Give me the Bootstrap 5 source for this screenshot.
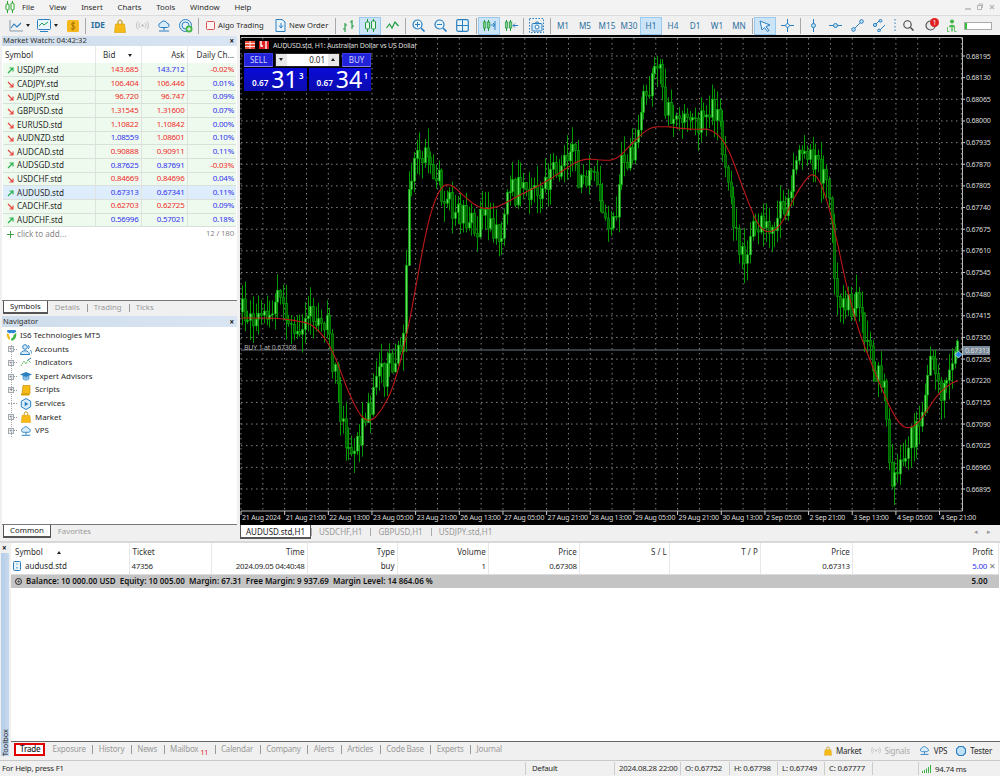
<!DOCTYPE html>
<html lang="en">
<head>
<meta charset="UTF-8">
<meta name="viewport" content="width=device-width, initial-scale=1.0">
<title>MetaTrader 5</title>
<link href="https://cdn.jsdelivr.net/npm/bootstrap@5.3.0/dist/css/bootstrap.min.css" rel="stylesheet">
<style>
  html, body { height: 776px; overflow: hidden; }
  body {
    font-family: "Noto Sans", "Open Sans", sans-serif;
    font-size: 8px;
    line-height: 1.2;
    background-color: #f0f0f0;
    color: #2a2a2a;
  }
  /* menu + toolbar */
  .menu-bar { height: 15px; padding-left: 22px; gap: 14.8px; background: #f3f3f3; font-size: 7.8px; }
  .menu-logo { position: absolute; left: 5px; top: 1px; }
  .win-btns { position: absolute; right: 5px; top: 3px; gap: 6px; color: #aaa; }
  .tool-bar { height: 20px; padding-left: 6px; border-top: 1px solid #dcdcdc; background: #f0f0f0; }
  .tb-btn { width: 22px; height: 18px; flex: none; border: 1px solid transparent; }
  .tb-wide { width: 28px; justify-content: flex-start !important; padding-left: 2px; gap: 3px; }
  .tb-text { height: 18px; flex: none; gap: 3px; font-size: 7.7px; }
  .tb-on { background: #cce4f7; border-color: #99c9ef; }
  .tb-sep { width: 1px; height: 16px; margin: 0 1px; background: #a8a8a8; flex: none; }
  .sep-a { margin-left: 2px; }
  .sep-b { margin-left: 3px; }
  .sep-c { margin-left: 3px; }
  .tb-tf { font-size: 8.2px; color: #2b6f9f; }
  .ide-txt { color: #2b6f9f; font-weight: 700; font-size: 8.4px; }
  .tb-dots { flex: none; margin: 0 1px 0 4px; }
  .drop-caret { width: 0; height: 0; border-left: 2.5px solid transparent; border-right: 2.5px solid transparent; border-top: 3px solid #222; }
  .gap-algo { margin-left: 6px; width: 65px; }
  .gap-order { margin-left: 4px; width: 58px; }
  .lvl-bar { width: 28px; height: 8px; margin-left: 1px; border: 1px solid #aaa; background: linear-gradient(90deg, #33c033 0 2px, #fff 2px); flex: none; }
  .notif-dot { position: absolute; right: 1px; top: 0; width: 9px; height: 9px; border-radius: 50%; background: #e02020; color: #fff; font-size: 6.5px; line-height: 9px; text-align: center; }
  .pos-host { position: relative; }

  /* main frame */
  .main-row { height: 506px; }
  .side-col { width: 240px; flex: none; padding: 1px 3px 0 2px; }
  .chart-col { width: 760px; flex: none; }
  .dock-panel { background: #fff; border: 0; }
  .dock-title { height: 11px; padding: 0 3px 0 1px; background: linear-gradient(90deg, #cfdcea, #d9e5f2); color: #333; font-size: 7.6px; }
  .title-short { height: 10px; }
  .dock-close { font-size: 8px; font-weight: 700; line-height: 1; color: #111; }
  .watch-box { height: 278px; }
  .nav-box { height: 222px; margin-top: 2px; }

  /* market watch table */
  .table.watch-table { --bs-table-bg: transparent; margin: 0; table-layout: fixed; width: 233px; margin-left: 1px; font-size: 8.1px; }
  .table.watch-table > * > tr > * { padding: 0 2px; height: 13.65px; border-bottom: 1px solid #d9dfd9; border-right: 1px solid #dfe3df; vertical-align: middle; white-space: nowrap; overflow: hidden; }
  .table.watch-table > * > tr > *:last-child { border-right: 0; }
  .table.watch-table > thead > tr > th { height: 17px; font-weight: 400; background: #fff; border-bottom: 0; border-right-color: #e8e8e8; color: #333; }
  .table.watch-table > tbody > tr > td { background: #eefaee; color: #2a2a2a; }
  .table.watch-table > tbody > tr.row-sel > td { background: #deedfb; }
  .table.watch-table > tbody > tr.row-add > td { background: #fff; border: 0; color: #8a8a8a; }
  .table.watch-table > tbody > tr > td.num-cell { font-size: 7.9px; letter-spacing: -.2px; }
  .col-sym { width: 92px; } .col-num { width: 46px; } .col-day { width: 49px; }
  .tick-up { color: #2f2ff0 !important; } .tick-dn { color: #f02a2a !important; }
  .sort-caret { display: inline-block; margin: 0 7px 1px 10px; width: 0; height: 0; border-left: 2.5px solid transparent; border-right: 2.5px solid transparent; border-top: 3px solid #222; }
  .sort-up { margin: 0 0 1px 12px; border-top: 0; border-bottom: 3px solid #222; }
  .arrow-ico { margin: 0 3px 0 2px; vertical-align: -1px; }

  /* tabs */
  .nav.tab-strip { flex-wrap: nowrap; height: 14px; padding-left: 1px; border-top: 1px solid #777; background: #f0f0f0; }
  .tab-strip .nav-link { padding: 0 7px; height: 13px; line-height: 12px; font-size: 7.8px; color: #9a9a9a; border-radius: 0; position: relative; white-space: nowrap; }
  .tab-strip .nav-link + .nav-link::before { content: ""; position: absolute; left: 0; top: 3px; height: 8px; width: 1px; background: #999; }
  .tab-strip .nav-link.active + .nav-link::before { display: none; }
  .tab-strip .nav-link.active { color: #222; background: #fff; border: 1px solid #555; border-top: 0; border-bottom-width: 2px; line-height: 11px; padding: 0 6px; }
  .fill-area { flex: 1 1 auto; }

  /* navigator tree */
  .nav-tree { padding-top: 2px; position: relative; height: 195px; }
  .tree-row { height: 13.6px; padding-left: 6px; font-size: 7.9px; white-space: nowrap; }
  .tree-root { padding-left: 4px; }
  .tree-label { padding-left: 3px; }
  .tree-plus { width: 6px; height: 6px; flex: none; border: 1px solid #a0a8b0; background: #f4f4f4; font-size: 6px; line-height: 4px; text-align: center; color: #446; }
  .tree-stub { width: 6px; flex: none; border-bottom: 1px dotted #999; height: 1px; }
  .tree-dash { width: 3px; flex: none; border-bottom: 1px dotted #999; height: 1px; margin-right: 3px; }
  .tree-line { position: absolute; left: 8.5px; top: 18px; height: 92px; border-left: 1px dotted #aaa; }

  /* chart */
  .chart-wrap { height: 490px; background: #000; position: relative; }
  .chart-svg { display: block; width: 760px; height: 490px; }
  .chart-svg text { font-family: "Noto Sans", sans-serif; font-size: 7px; letter-spacing: -.2px; fill: #ddd; }
  .trade-pad { position: absolute; left: 4px; top: 18px; width: 127px; color: #fff; }
  .pad-top { height: 15px; gap: 2px; }
  .pad-btn { width: 29px; height: 14px; background: #2222d8; border: 1px solid #3a3ae8; border-bottom: 1px solid #8080ee; color: #cfd4ff; font-size: 8px; text-align: center; line-height: 12px; flex: none; }
  .pad-qty { width: 65px; height: 14px; background: #fff; border: 1px solid #222; color: #222; font-size: 8px; flex: none; }
  .pad-step { width: 11px; height: 100%; background: #e8e8e8; flex: none; position: relative; }
  .pad-val { flex: 1 1 auto; text-align: right; padding-right: 3px; line-height: 12px; }
  .car-up, .car-dn { position: absolute; left: 3px; top: 4px; width: 0; height: 0; border-left: 2.5px solid transparent; border-right: 2.5px solid transparent; }
  .car-up { border-bottom: 3px solid #222; } .car-dn { border-top: 3px solid #222; }
  .pad-prices { gap: 2px; }
  .pad-price { width: 62.5px; height: 23px; background: linear-gradient(#0a0ad8, #0c0cb0); padding-left: 8px; align-items: flex-end; flex: none; position: relative; }
  .pr-small { font-size: 8.2px; font-weight: 600; padding-bottom: 3px; padding-right: 3px; }
  .pr-big { font-size: 23px; line-height: 20px; padding-bottom: 2px; }
  .pr-sup { font-size: 8px; font-weight: 600; position: absolute; right: 3px; top: 3px; }
  .doc-tabs { height: 16px; padding-left: 0; background: #f0f0f0; position: relative; }
  .doc-tabs .nav-link { padding: 0 8px; height: 14px; line-height: 13px; font-size: 8px; color: #9a9a9a; position: relative; border-radius: 0; white-space: nowrap; }
  .doc-tabs .nav-link + .nav-link::before { content: ""; position: absolute; left: 0; top: 3px; height: 8px; width: 1px; background: #aaa; }
  .doc-tabs .nav-link.active { color: #222; background: #fff; border: 1px solid #555; border-top: 0; border-bottom-width: 2px; width: 71px; padding: 0 5px; }
  .doc-arrows { position: absolute; right: 9px; top: 3px; gap: 9px; color: #999; font-size: 7px; }

  /* toolbox */
  .tool-box { height: 219px; border-top: 2px solid #d8d8d8; position: relative; }
  .box-strip { width: 11px; flex: none; position: relative; }
  .box-close { position: absolute; left: 2px; top: 1px; font-size: 8px; font-weight: 700; line-height: 1; color: #111; }
  .box-label { position: absolute; left: 1px; top: 10px; bottom: 4px; width: 8px; background: linear-gradient(90deg, #b5cde8, #c6d9ee); }
  .box-label span { position: absolute; left: 0; bottom: 0; writing-mode: vertical-rl; transform: rotate(180deg); font-size: 7.4px; line-height: 8px; color: #222; }
  .box-main { flex: 1 1 auto; }
  .trade-area { height: 198px; background: #fff; }
  .table.trade-table { --bs-table-bg: transparent; table-layout: fixed; width: 988px; margin: 0; font-size: 8px; }
  .table.trade-table > * > tr > * { padding: 0 2px; border-bottom: 0; white-space: nowrap; vertical-align: middle; }
  .table.trade-table > thead > tr > th { height: 16px; padding-top: 2px; font-weight: 400; border-right: 1px solid #e8e8e8; color: #333; }
  .table.trade-table > tbody > tr > td { height: 15px; border-right: 1px solid #e8e8e8; border-bottom: 1px solid #ddd; color: #2a2a2a; }
  .table.trade-table > tbody > tr > td.num-cell { font-size: 7.9px; letter-spacing: -.25px; }
  .table.trade-table > tbody > tr.row-total > td { height: 14px; background: #c4c4c4; font-weight: 600; border: 0; color: #111; }
  .tc-1 { width: 118px; padding-left: 4px !important; } .tc-2 { width: 82px; padding-left: 3px !important; } .tc-3 { width: 96px; } .tc-4 { width: 90px; } .tc-5 { width: 91px; }
  .tc-6 { width: 91px; } .tc-7 { width: 90px; } .tc-8 { width: 91px; } .tc-9 { width: 92px; } .tc-10 { width: 146px; }
  .profit-cell { padding-right: 11px !important; position: relative; }
  .profit-x { position: absolute; right: 2px; top: 2px; color: #777; font-size: 8px; }
  .head-right { padding-right: 5px !important; }
  .file-ico { margin-right: 4px; vertical-align: -2px; }
  .circ-plus { display: inline-block; width: 7px; height: 7px; border: 1px solid #222; border-radius: 50%; font-size: 6.5px; line-height: 5px; text-align: center; margin: 0 4px 0 2px; font-weight: 400; }
  .box-tabs { height: 17px; padding-left: 3px; border-top: 1px solid #666; }
  .nav.trade-tabs { flex-wrap: nowrap; }
  .trade-tabs .nav-link { padding: 0 6.5px; height: 15px; line-height: 13px; font-size: 8px; letter-spacing: -.2px; color: #9a9a9a; position: relative; border-radius: 0; white-space: nowrap; }
  .trade-tabs .nav-link + .nav-link::before { content: ""; position: absolute; left: 0; top: 3px; height: 9px; width: 1px; background: #999; }
  .trade-tabs .nav-link.active + .nav-link::before { display: none; }
  .trade-tabs .nav-link.active { color: #222; background: #fff; outline: 2px solid #e00000; outline-offset: -2px; padding: 0 6px; width: 31px; margin-top: 1px; height: 13px; font-weight: 500; margin-right: 1px; line-height: 11px; }
  .mail-num { color: #e02020; font-size: 7px; position: relative; top: 3px; margin-left: 2px; }
  .side-links { margin-left: auto; gap: 9px; padding-right: 8px; font-size: 8px; letter-spacing: -.2px; padding-top: 1px; }
  .side-off { color: #aaa; }

  /* status */
  .status-bar { height: 16px; border-top: 1px solid #c8c8c8; background: #f0f0f0; font-size: 7.8px; letter-spacing: -.2px; }
  .st-cell { height: 13px; padding-left: 4px; border-left: 1px solid #ccc; flex: none; line-height: 12px; white-space: nowrap; }
  .st-help { width: 525px; padding-left: 2px; border-left: 0; }
  .st-def { width: 89px; padding-left: 6px; } .st-time { width: 66px; } .st-o { width: 49px; } .st-h { width: 48px; } .st-l { width: 47px; } .st-c { width: 48px; } .st-gap { width: 46px; }
  .st-ping { gap: 4px; padding-left: 3px; }
</style>
</head>
<body>

<svg width="0" height="0" class="position-absolute">
  <defs>
    <symbol id="i-bag" viewBox="0 0 12 14"><path d="M4 5V3a2 2 0 0 1 4 0v2" fill="none" stroke="#b88a00" stroke-width="1"/><path d="M1.5 5h9l1 8.5H.5z" fill="#f6bb18" stroke="#d9a000" stroke-width=".6"/></symbol>
    <symbol id="i-cloud" viewBox="0 0 14 14"><path d="M3.5 8.5a2.3 2.3 0 0 1 .2-4.5A3.4 3.4 0 0 1 10 4.2a2.2 2.2 0 0 1 .5 4.3z" fill="#d8ecfa" stroke="#2a7fc0"/><path d="M7 8.5v2.5M2 12h10" stroke="#2a7fc0" stroke-width="1.2" fill="none"/></symbol>
    <symbol id="i-up" viewBox="0 0 7 7"><path d="M1 6 6 1M2.5 1H6v3.5" fill="none" stroke="#1fb04a" stroke-width="1.1"/></symbol>
    <symbol id="i-dn" viewBox="0 0 7 7"><path d="M1 1 6 6M6 2.5V6H2.500" fill="none" stroke="#e8413c" stroke-width="1.1"/></symbol>
  </defs>
</svg>

<!-- menu -->
<div class="menu-bar d-flex align-items-center position-relative">
  <svg class="menu-logo" width="10" height="12" viewBox="0 0 10 12"><path d="M2.500 0v12M7.500 0v12" stroke="#29a329"/><rect x="1" y="3" width="3" height="6" rx="1" fill="#fff" stroke="#29a329"/><rect x="6" y="2" width="3" height="7" rx="1" fill="#fff" stroke="#29a329"/></svg>
  <span>File</span><span>View</span><span>Insert</span><span>Charts</span><span>Tools</span><span>Window</span><span>Help</span>
  <div class="win-btns d-flex align-items-center">
    <svg width="6" height="8" viewBox="0 0 6 8"><path d="M0 6h6" stroke="#b5b5b5" stroke-width="1.500"/></svg>
    <svg width="6" height="8" viewBox="0 0 6 8"><path d="M.5 2.500h4v4h-4zM2 2.500V1h3.500v3.500H4.500" fill="none" stroke="#b5b5b5"/></svg>
    <svg width="6" height="8" viewBox="0 0 6 8"><path d="m1 2 4 4M5 2 1 6" stroke="#b5b5b5" stroke-width="1.200"/></svg>
  </div>
</div>

<!-- toolbar -->
<div class="tool-bar d-flex align-items-center">
  <div class="tb-btn tb-wide d-flex align-items-center justify-content-center"><svg width="14" height="12" viewBox="0 0 14 12"><path d="M1 0v11h13" fill="none" stroke="#8a9aa8"/><path d="m2 8 3-4 3 3 4-4" fill="none" stroke="#2a7fc0" stroke-width="1.100"/></svg><span class="drop-caret"></span></div>
  <div class="tb-btn tb-wide d-flex align-items-center justify-content-center"><svg width="14" height="13" viewBox="0 0 14 13"><rect x=".5" y=".5" width="13" height="10" rx="1" fill="#eaf4fb" stroke="#2a7fc0"/><path d="m2 7 3-3 2 2 4-3" fill="none" stroke="#1fa04a"/><path d="M3 12.500h8" stroke="#2a7fc0"/></svg><span class="drop-caret"></span></div>
  <div class="tb-btn d-flex align-items-center justify-content-center"><svg width="12" height="12" viewBox="0 0 12 12"><rect width="12" height="12" rx="1.500" fill="#f5b91d"/><path d="M8 3.500C7 2.600 4.500 2.800 4.500 4.300S8 5.700 8 7.500 5 9.500 4 8.500M6 1.500v9" fill="none" stroke="#9a6a00" stroke-width=".9"/></svg></div>
  <div class="tb-sep"></div>
  <div class="tb-btn d-flex align-items-center justify-content-center ide-txt">IDE</div>
  <div class="tb-btn d-flex align-items-center justify-content-center"><svg width="12" height="14"><use href="#i-bag"/></svg></div>
  <div class="tb-btn d-flex align-items-center justify-content-center"><svg width="13" height="9" viewBox="0 0 13 9"><circle cx="6.500" cy="4.500" r="1.200" fill="#bbb"/><path d="M4 2a3.500 3.500 0 0 0 0 5M9 2a3.500 3.500 0 0 1 0 5M2 .5a6 6 0 0 0 0 8M11 .5a6 6 0 0 1 0 8" fill="none" stroke="#c0c0c0"/></svg></div>
  <div class="tb-btn d-flex align-items-center justify-content-center"><svg width="14" height="14"><use href="#i-cloud"/></svg></div>
  <div class="tb-btn d-flex align-items-center justify-content-center"><svg width="14" height="14" viewBox="0 0 14 14"><circle cx="6.500" cy="6.500" r="6" fill="#e4f1fa" stroke="#2a7fc0"/><circle cx="6.500" cy="6.500" r="3.500" fill="none" stroke="#2a7fc0"/><circle cx="10" cy="10" r="3.500" fill="#43b649"/><path d="M10 8v4M8 10h4" stroke="#fff"/></svg></div>
  <div class="tb-sep"></div>
  <div class="tb-text gap-algo d-flex align-items-center"><svg width="9" height="9" viewBox="0 0 9 9"><rect x=".5" y=".5" width="8" height="8" rx="1" fill="#fdf3f3" stroke="#d9534f"/></svg><span>Algo Trading</span></div>
  <div class="tb-text gap-order d-flex align-items-center"><svg width="11" height="13" viewBox="0 0 11 13"><path d="M1 .5h6L10 3v9.500H1z" fill="#eaf4fb" stroke="#2a7fc0"/><path d="M6 4v5M4 6.500l2 2.500 2-2.500" fill="none" stroke="#2a7fc0"/></svg><span>New Order</span></div>
  <div class="tb-sep sep-a"></div>
  <div class="tb-btn d-flex align-items-center justify-content-center"><svg width="13" height="12" viewBox="0 0 13 12"><path d="M3 3v9M1 9h2M3 5h2M10 0v9M8 2h2M10 6h2" fill="none" stroke="#1f9a3c" stroke-width="1.100"/></svg></div>
  <div class="tb-btn tb-on d-flex align-items-center justify-content-center"><svg width="13" height="13" viewBox="0 0 13 13"><path d="M3.500 0v13M9.500 0v13" stroke="#1f9a3c"/><rect x="1.500" y="3" width="4" height="7" rx="1" fill="#e5f5ea" stroke="#1f9a3c"/><rect x="7.500" y="2" width="4" height="8" rx="1" fill="#e5f5ea" stroke="#1f9a3c"/></svg></div>
  <div class="tb-btn d-flex align-items-center justify-content-center"><svg width="13" height="9" viewBox="0 0 13 9"><path d="m.5 7 3-4 2.500 4 3-6 3.500 4" fill="none" stroke="#1f9a3c" stroke-width="1.200"/></svg></div>
  <div class="tb-sep sep-a"></div>
  <div class="tb-btn d-flex align-items-center justify-content-center"><svg width="13" height="13" viewBox="0 0 13 13"><circle cx="5.500" cy="5.500" r="4.500" fill="#eaf4fb" stroke="#2a7fc0" stroke-width="1.200"/><path d="m9 9 3.500 3.500" stroke="#2a7fc0" stroke-width="1.600"/><path d="M5.500 3v5M3 5.500h5" stroke="#2a7fc0"/></svg></div>
  <div class="tb-btn d-flex align-items-center justify-content-center"><svg width="13" height="13" viewBox="0 0 13 13"><circle cx="5.500" cy="5.500" r="4.500" fill="#eaf4fb" stroke="#2a7fc0" stroke-width="1.200"/><path d="m9 9 3.500 3.500" stroke="#2a7fc0" stroke-width="1.600"/><path d="M3 5.500h5" stroke="#2a7fc0"/></svg></div>
  <div class="tb-btn d-flex align-items-center justify-content-center"><svg width="13" height="13" viewBox="0 0 13 13"><rect x=".7" y=".7" width="11.600" height="11.600" rx="1.500" fill="#eaf4fb" stroke="#2a7fc0" stroke-width="1.200"/><path d="M6.500 1v11M1 6.500h11" stroke="#2a7fc0"/></svg></div>
  <div class="tb-sep sep-b"></div>
  <div class="tb-btn tb-on d-flex align-items-center justify-content-center"><svg width="14" height="13" viewBox="0 0 14 13"><path d="M2.500 1v11M6.500 1v11" stroke="#1f9a3c"/><rect x="1.300" y="3" width="2.500" height="6" fill="#7fce90" stroke="#1f9a3c" stroke-width=".7"/><rect x="5.300" y="3" width="2.500" height="6" fill="#7fce90" stroke="#1f9a3c" stroke-width=".7"/><path d="M8.500 6H13M13 2v9M11 4l2 2-2 2" fill="none" stroke="#2a7fc0"/></svg></div>
  <div class="tb-btn d-flex align-items-center justify-content-center"><svg width="14" height="13" viewBox="0 0 14 13"><path d="M2.500 1v11M6.500 1v11" stroke="#1f9a3c"/><rect x="1.300" y="3" width="2.500" height="6" fill="#7fce90" stroke="#1f9a3c" stroke-width=".7"/><rect x="5.300" y="3" width="2.500" height="6" fill="#7fce90" stroke="#1f9a3c" stroke-width=".7"/><path d="M9 6.500h5M11 4.500l-2 2 2 2" fill="none" stroke="#2a7fc0"/></svg></div>
  <div class="tb-sep"></div>
  <div class="tb-btn d-flex align-items-center justify-content-center"><svg width="15" height="15" viewBox="0 0 15 15"><rect x=".5" y=".5" width="14" height="14" fill="none" stroke="#2a7fc0" stroke-dasharray="1.500 1.500"/><rect x="3" y="5.500" width="10" height="7.500" rx="1" fill="#d8ecfa" stroke="#2a7fc0"/><circle cx="8" cy="9" r="2" fill="#fff" stroke="#2a7fc0"/><path d="M6 5.500l1-1.500h2l1 1.500" fill="none" stroke="#2a7fc0"/></svg></div>
  <div class="tb-sep sep-c"></div>
  <div class="tb-btn tb-tf d-flex align-items-center justify-content-center">M1</div>
  <div class="tb-btn tb-tf d-flex align-items-center justify-content-center">M5</div>
  <div class="tb-btn tb-tf d-flex align-items-center justify-content-center">M15</div>
  <div class="tb-btn tb-tf d-flex align-items-center justify-content-center">M30</div>
  <div class="tb-btn tb-tf tb-on d-flex align-items-center justify-content-center">H1</div>
  <div class="tb-btn tb-tf d-flex align-items-center justify-content-center">H4</div>
  <div class="tb-btn tb-tf d-flex align-items-center justify-content-center">D1</div>
  <div class="tb-btn tb-tf d-flex align-items-center justify-content-center">W1</div>
  <div class="tb-btn tb-tf d-flex align-items-center justify-content-center">MN</div>
  <div class="tb-sep sep-a"></div>
  <div class="tb-btn tb-on d-flex align-items-center justify-content-center"><svg width="12" height="12" viewBox="0 0 12 12"><path d="m1 1 10 4-4 1.500 3 4-1.500 1-3-4L3 10z" fill="#eaf4fb" stroke="#2a7fc0"/></svg></div>
  <div class="tb-btn d-flex align-items-center justify-content-center"><svg width="13" height="13" viewBox="0 0 13 13"><path d="M6.500 0v13M0 6.500h13" stroke="#2a7fc0"/><circle cx="6.500" cy="6.500" r="1.800" fill="#fff" stroke="#2a7fc0"/></svg></div>
  <div class="tb-sep sep-a"></div>
  <div class="tb-btn d-flex align-items-center justify-content-center"><svg width="5" height="13" viewBox="0 0 5 13"><path d="M2.500 0v13" stroke="#2a7fc0"/><circle cx="2.500" cy="6.500" r="2" fill="#bfe0f5" stroke="#2a7fc0"/></svg></div>
  <div class="tb-btn d-flex align-items-center justify-content-center"><svg width="13" height="5" viewBox="0 0 13 5"><path d="M0 2.500h13" stroke="#2a7fc0"/><circle cx="6.500" cy="2.500" r="2" fill="#bfe0f5" stroke="#2a7fc0"/></svg></div>
  <div class="tb-btn d-flex align-items-center justify-content-center"><svg width="13" height="13" viewBox="0 0 13 13"><path d="M2.500 10.500l8-8" stroke="#2a7fc0"/><circle cx="2.500" cy="10.500" r="1.800" fill="#bfe0f5" stroke="#2a7fc0"/><circle cx="10.500" cy="2.500" r="1.800" fill="#bfe0f5" stroke="#2a7fc0"/></svg></div>
  <div class="tb-btn d-flex align-items-center justify-content-center"><svg width="13" height="13" viewBox="0 0 13 13"><path d="M1 7l5-5M6 12l6-6" stroke="#2a7fc0"/><circle cx="2" cy="6" r="1.600" fill="#bfe0f5" stroke="#2a7fc0"/><circle cx="7.500" cy="1.800" r="1.400" fill="#bfe0f5" stroke="#2a7fc0"/><circle cx="6" cy="11.500" r="1.400" fill="#bfe0f5" stroke="#2a7fc0"/></svg></div>
  <svg class="tb-dots" width="2" height="14" viewBox="0 0 2 14"><path d="M1 0v14" stroke="#2a7fc0" stroke-dasharray="1.500 2"/></svg>
  <div class="tb-btn d-flex align-items-center justify-content-center"><svg width="11" height="11" viewBox="0 0 11 11"><circle cx="4.500" cy="4.500" r="3.700" fill="none" stroke="#444" stroke-width="1.100"/><path d="m7.500 7.500 3 3" stroke="#444" stroke-width="1.400"/></svg></div>
  <div class="tb-btn pos-host d-flex align-items-center justify-content-center"><svg width="11" height="11" viewBox="0 0 11 11"><circle cx="5.500" cy="5.500" r="4.500" fill="#e8e8e8" stroke="#555" stroke-width="1.200"/></svg><span class="notif-dot">1</span></div>
  <div class="tb-btn d-flex flex-column align-items-center justify-content-center"><svg width="8" height="8" viewBox="0 0 8 8"><circle cx="4" cy="2.500" r="2" fill="#43b649"/><path d="M1 8c0-3 6-3 6 0z" fill="#43b649"/></svg><svg width="10" height="5" viewBox="0 0 10 5"><path d="M.500 0v4.500h2M4 0l1 4.500L6 0M7.500 0v4.500h2" fill="none" stroke="#43b649" stroke-width=".8"/></svg></div>
  <div class="lvl-bar"></div>
</div>

<div class="main-row d-flex">
  <div class="side-col">
    <!-- market watch -->
    <div class="dock-panel watch-box d-flex flex-column">
      <div class="dock-title title-short d-flex align-items-center justify-content-between"><span>Market Watch: 04:42:32</span><span class="dock-close">×</span></div>
      <table class="table watch-table">
        <thead><tr><th class="col-sym">Symbol</th><th class="col-num text-end">Bid <span class="sort-caret"></span></th><th class="col-num text-end">Ask</th><th class="col-day text-end">Daily Ch...</th></tr></thead>
        <tbody id="watchRows"></tbody>
      </table>
      <div class="fill-area"></div>
      <ul class="nav tab-strip">
        <li class="nav-link active">Symbols</li><li class="nav-link">Details</li><li class="nav-link">Trading</li><li class="nav-link">Ticks</li>
      </ul>
    </div>
    <!-- navigator -->
    <div class="dock-panel nav-box d-flex flex-column">
      <div class="dock-title d-flex align-items-center justify-content-between"><span>Navigator</span><span class="dock-close">×</span></div>
      <div class="nav-tree fill-area">
        <div class="tree-line"></div>
        <div class="tree-row tree-root d-flex align-items-center"><svg width="11" height="12" viewBox="0 0 11 12"><path d="M1 2a4.500 4.500 0 0 1 9 0L7 3.500a2 2 0 0 0-3 0z" fill="#2a86d0"/><path d="M10 3c1 4-1 7-4.500 8L5 8.500C7 8 7.500 6 7.500 5z" fill="#43b649"/><path d="M1 3c-1 3 1 6 3 7V7C3 6.500 3 5 3 4.500z" fill="#f5b91d"/></svg><span class="tree-label">IS6 Technologies MT5</span></div>
        <div class="tree-row d-flex align-items-center"><span class="tree-plus">+</span><span class="tree-dash"></span><svg width="12" height="11" viewBox="0 0 12 11"><circle cx="5" cy="3" r="2.300" fill="#d8ecfa" stroke="#2a7fc0"/><path d="M.5 10.500c0-5 9-5 9 0z" fill="#d8ecfa" stroke="#2a7fc0"/><path d="M8 1a2.300 2.300 0 0 1 0 4M10 6c1.300.7 1.700 2 1.700 3.500" fill="none" stroke="#2a7fc0"/></svg><span class="tree-label">Accounts</span></div>
        <div class="tree-row d-flex align-items-center"><span class="tree-plus">+</span><span class="tree-dash"></span><svg width="12" height="11" viewBox="0 0 12 11"><path d="m1 9 3-5 2 3 2-4 3 3" fill="none" stroke="#43b649" stroke-dasharray="1.500 1"/><path d="m8 3 3-2" stroke="#2a7fc0"/></svg><span class="tree-label">Indicators</span></div>
        <div class="tree-row d-flex align-items-center"><span class="tree-plus">+</span><span class="tree-dash"></span><svg width="12" height="11" viewBox="0 0 12 11"><path d="M0 3.500 6 1l6 2.500L6 6z" fill="#2a7fc0"/><path d="M3 5v3c2 1.500 4 1.500 6 0V5L6 6.500z" fill="#8fc6ea" stroke="#2a7fc0" stroke-width=".6"/></svg><span class="tree-label">Expert Advisors</span></div>
        <div class="tree-row d-flex align-items-center"><span class="tree-plus">+</span><span class="tree-dash"></span><svg width="12" height="11" viewBox="0 0 12 11"><path d="M3 .5h7v8H2z" fill="#f6bb18" stroke="#c99200" stroke-width=".7"/><path d="M1 8.500h8.500v2H1z" fill="#d9a000"/></svg><span class="tree-label">Scripts</span></div>
        <div class="tree-row d-flex align-items-center"><span class="tree-stub"></span><span class="tree-dash"></span><svg width="12" height="12" viewBox="0 0 12 12"><path d="M6 .5 10.700 3.200v5.600L6 11.500 1.300 8.800V3.200z" fill="#d8ecfa" stroke="#2a7fc0"/><path d="M4.700 3.800 8.300 6 4.700 8.200z" fill="#2a7fc0"/></svg><span class="tree-label">Services</span></div>
        <div class="tree-row d-flex align-items-center"><span class="tree-plus">+</span><span class="tree-dash"></span><svg width="12" height="12"><use href="#i-bag"/></svg><span class="tree-label">Market</span></div>
        <div class="tree-row d-flex align-items-center"><span class="tree-plus">+</span><span class="tree-dash"></span><svg width="12" height="12"><use href="#i-cloud"/></svg><span class="tree-label">VPS</span></div>
      </div>
      <ul class="nav tab-strip">
        <li class="nav-link active">Common</li><li class="nav-link">Favorites</li>
      </ul>
    </div>
  </div>

  <div class="chart-col">
    <div class="chart-wrap">
      <svg id="chartSvg" class="chart-svg" viewBox="240 35 760 490"></svg>
      <div class="trade-pad">
        <div class="pad-top d-flex">
          <div class="pad-btn">SELL</div>
          <div class="pad-qty d-flex"><div class="pad-step"><span class="car-dn"></span></div><div class="pad-val">0.01</div><div class="pad-step"><span class="car-up"></span></div></div>
          <div class="pad-btn">BUY</div>
        </div>
        <div class="pad-prices d-flex">
          <div class="pad-price d-flex"><span class="pr-small">0.67</span><span class="pr-big">31</span><span class="pr-sup">3</span></div>
          <div class="pad-price d-flex"><span class="pr-small">0.67</span><span class="pr-big">34</span><span class="pr-sup">1</span></div>
        </div>
      </div>
    </div>
    <div class="doc-tabs">
      <ul class="nav">
        <li class="nav-link active">AUDUSD.std,H1</li><li class="nav-link">USDCHF,H1</li><li class="nav-link">GBPUSD,H1</li><li class="nav-link">USDJPY.std,H1</li>
      </ul>
      <div class="doc-arrows d-flex"><span>◂</span><span>▸</span></div>
    </div>
  </div>
</div>

<!-- toolbox -->
<div class="tool-box d-flex">
  <div class="box-strip">
    <span class="box-close">×</span>
    <div class="box-label"><span>Toolbox</span></div>
  </div>
  <div class="box-main d-flex flex-column">
    <div class="trade-area">
      <table class="table trade-table">
        <thead>
          <tr>
            <th class="tc-1">Symbol <span class="sort-caret sort-up"></span></th><th class="tc-2">Ticket</th><th class="tc-3 text-end">Time</th><th class="tc-4 text-end">Type</th><th class="tc-5 text-end">Volume</th>
            <th class="tc-6 text-end">Price</th><th class="tc-7 text-end">S / L</th><th class="tc-8 text-end">T / P</th><th class="tc-9 text-end">Price</th><th class="tc-10 text-end head-right">Profit</th>
          </tr>
        </thead>
        <tbody>
          <tr>
            <td><svg class="file-ico" width="8" height="10" viewBox="0 0 8 10"><rect x=".5" y=".5" width="7" height="9" rx="1" fill="#eaf4fb" stroke="#2a7fc0"/><path d="M4 2.500v1M4 6v1.500" stroke="#2a7fc0"/></svg>audusd.std</td><td class="num-cell">47356</td><td class="text-end num-cell">2024.09.05 04:40:48</td><td class="text-end">buy</td><td class="text-end num-cell">1</td>
            <td class="text-end num-cell">0.67308</td><td></td><td></td><td class="text-end num-cell">0.67313</td><td class="text-end profit-cell num-cell"><span class="tick-up">5.00</span><span class="profit-x">✕</span></td>
          </tr>
          <tr class="row-total">
            <td colspan="9"><span class="circ-plus">+</span>Balance: 10 000.00 USD&nbsp; Equity: 10 005.00&nbsp; Margin: 67.31&nbsp; Free Margin: 9 937.69&nbsp; Margin Level: 14 864.06 %</td>
            <td class="text-end profit-cell">5.00</td>
          </tr>
        </tbody>
      </table>
    </div>
    <div class="box-tabs d-flex">
      <ul class="nav trade-tabs">
        <li class="nav-link active">Trade</li><li class="nav-link">Exposure</li><li class="nav-link">History</li><li class="nav-link">News</li><li class="nav-link">Mailbox<span class="mail-num">11</span></li><li class="nav-link">Calendar</li><li class="nav-link">Company</li><li class="nav-link">Alerts</li><li class="nav-link">Articles</li><li class="nav-link">Code Base</li><li class="nav-link">Experts</li><li class="nav-link">Journal</li>
      </ul>
      <div class="side-links d-flex align-items-center">
        <span class="d-flex align-items-center gap-1"><svg width="8" height="10"><use href="#i-bag"/></svg>Market</span>
        <span class="d-flex align-items-center gap-1 side-off"><svg width="10" height="7" viewBox="0 0 13 9"><circle cx="6.500" cy="4.500" r="1.200" fill="#bbb"/><path d="M4 2a3.500 3.500 0 0 0 0 5M9 2a3.500 3.500 0 0 1 0 5M2 .5a6 6 0 0 0 0 8M11 .5a6 6 0 0 1 0 8" fill="none" stroke="#c0c0c0"/></svg>Signals</span>
        <span class="d-flex align-items-center gap-1"><svg width="11" height="11"><use href="#i-cloud"/></svg>VPS</span>
        <span class="d-flex align-items-center gap-1"><svg width="10" height="10" viewBox="0 0 10 10"><path d="M3 .5h4L9.500 3v4L7 9.500H3L.5 7V3z" fill="#bfe0f5" stroke="#2a7fc0" stroke-width="1.100"/></svg>Tester</span>
      </div>
    </div>
  </div>
</div>

<!-- status bar -->
<div class="status-bar d-flex align-items-center">
  <div class="st-cell st-help">For Help, press F1</div>
  <div class="st-cell st-def">Default</div>
  <div class="st-cell st-time">2024.08.28 22:00</div>
  <div class="st-cell st-o">O: 0.67752</div>
  <div class="st-cell st-h">H: 0.67798</div>
  <div class="st-cell st-l">L: 0.67749</div>
  <div class="st-cell st-c">C: 0.67777</div>
  <div class="st-cell st-gap"></div>
  <div class="st-cell st-ping d-flex align-items-center"><svg width="9" height="8" viewBox="0 0 9 8"><path d="M.5 8V6M2.500 8V5M4.500 8V3.500M6.500 8V2M8.500 8V0" stroke="#3cb043"/></svg><span>94.74 ms</span></div>
</div>

<script src="https://cdn.jsdelivr.net/npm/bootstrap@5.3.0/dist/js/bootstrap.bundle.min.js"></script>
<script>
  // Market watch rows: symbol, trend, bid, ask, daily, and which way each value ticked
  const quotes = [
    ["USDJPY.std", "up", "143.685", "dn", "143.712", "up", "-0.02%", "dn"],
    ["CADJPY.std", "dn", "106.404", "dn", "106.446", "dn", "0.01%", "up"],
    ["AUDJPY.std", "dn", "96.720", "dn", "96.747", "dn", "0.09%", "up"],
    ["GBPUSD.std", "dn", "1.31545", "dn", "1.31600", "dn", "0.07%", "up"],
    ["EURUSD.std", "dn", "1.10822", "dn", "1.10842", "dn", "0.00%", "up"],
    ["AUDNZD.std", "dn", "1.08559", "up", "1.08601", "dn", "0.10%", "up"],
    ["AUDCAD.std", "dn", "0.90888", "dn", "0.90911", "dn", "0.11%", "up"],
    ["AUDSGD.std", "up", "0.87625", "up", "0.87691", "up", "-0.03%", "dn"],
    ["USDCHF.std", "dn", "0.84669", "dn", "0.84696", "dn", "0.04%", "up"],
    ["AUDUSD.std", "up", "0.67313", "up", "0.67341", "up", "0.11%", "up"],
    ["CADCHF.std", "dn", "0.62703", "dn", "0.62725", "dn", "0.09%", "up"],
    ["AUDCHF.std", "up", "0.56996", "up", "0.57021", "up", "0.18%", "up"]
  ];
  let rowsHtml = "";
  quotes.forEach(q => {
    rowsHtml += `<tr class="${q[0] === "AUDUSD.std" ? "row-sel" : ""}">
      <td><svg class="arrow-ico" width="7" height="7"><use href="#i-${q[1]}"/></svg>${q[0]}</td>
      <td class="text-end num-cell tick-${q[3]}">${q[2]}</td>
      <td class="text-end num-cell tick-${q[5]}">${q[4]}</td>
      <td class="text-end num-cell tick-${q[7]}">${q[6]}</td></tr>`;
  });
  rowsHtml += `<tr class="row-add"><td><svg class="arrow-ico" width="7" height="7" viewBox="0 0 7 7"><path d="M3.500 0v7M0 3.500h7" stroke="#43a047"/></svg>click to add...</td><td></td><td></td><td class="text-end num-cell">12 / 180</td></tr>`;
  document.getElementById("watchRows").innerHTML = rowsHtml;

  // Chart: coordinates are page pixels thanks to the viewBox
  const svg = document.getElementById("chartSvg");
  const NS = "http://www.w3.org/2000/svg";
  function add(tag, attrs, txt) {
    const el = document.createElementNS(NS, tag);
    for (const k in attrs) el.setAttribute(k, attrs[k]);
    if (txt) el.textContent = txt;
    svg.appendChild(el);
    return el;
  }

  const priceAnchors = [[241,312],[255,322],[270,314],[280,298],[290,325],[300,320],[315,322],[328,330],[338,400],[348,455],[355,442],[365,420],[375,385],[385,372],[395,360],[403,335],[408,205],[415,150],[425,160],[435,168],[445,200],[460,215],[475,222],[490,225],[500,238],[510,190],[525,190],[540,195],[555,170],[570,150],[580,180],[595,172],[605,210],[612,235],[620,170],[630,160],[640,110],[650,78],[657,62],[665,110],[675,118],[690,125],[705,112],[718,105],[725,170],[732,205],[740,262],[750,240],[760,220],[770,245],[780,215],[790,190],[800,155],[810,150],[820,170],[830,205],[835,300],[845,312],[855,300],[865,340],[875,368],[885,400],[890,480],[900,452],[910,440],[920,420],[930,352],[940,395],[950,382],[957,352]];
  const maAnchors = [[241,318],[280,318],[320,325],[340,365],[360,428],[375,425],[395,385],[405,360],[415,290],[430,200],[440,175],[455,185],[470,205],[490,212],[510,200],[530,190],[550,180],[570,165],[590,155],[610,165],[625,155],[640,130],[660,125],[690,130],[720,128],[735,160],[750,215],[770,245],[790,210],[805,170],[825,170],[838,250],[850,310],[870,360],[890,410],[905,437],[915,435],[925,410],[940,390],[958,378]];

  function interp(pts, x) {
    for (let i = 1; i < pts.length; i++) {
      if (x <= pts[i][0]) {
        const t = (x - pts[i - 1][0]) / (pts[i][0] - pts[i - 1][0]);
        return pts[i - 1][1] + t * (pts[i][1] - pts[i - 1][1]);
      }
    }
    return pts[pts.length - 1][1];
  }

  // simple seeded random so the candles stay the same each render
  let seed = 4711;
  function rnd() { seed = (seed * 16807) % 2147483647; return seed / 2147483647; }

  // grid
  for (let x = 241; x < 962; x += 21.83) add("line", { x1: x, x2: x, y1: 38, y2: 511, stroke: "#808080", "stroke-dasharray": "1.500 3.500" });
  for (let i = 0; i <= 20; i++) {
    const y = 56 + i * 21.65;
    add("line", { x1: 241, x2: 962, y1: y, y2: y, stroke: "#808080", "stroke-dasharray": "1.500 3.500" });
    add("line", { x1: 962, x2: 965, y1: y, y2: y, stroke: "#ccc" });
    add("text", { x: 966, y: y + 2.500 }, (0.68195 - i * 0.00065).toFixed(5));
  }
  add("path", { d: "M241 37.500H962.500V511H241", fill: "none", stroke: "#b8b8b8" });

  // time axis
  const times = ["21 Aug 2024","21 Aug 21:00","22 Aug 13:00","23 Aug 05:00","23 Aug 21:00","26 Aug 13:00","27 Aug 05:00","27 Aug 21:00","28 Aug 13:00","29 Aug 05:00","29 Aug 21:00","30 Aug 13:00","2 Sep 05:00","2 Sep 21:00","3 Sep 13:00","4 Sep 05:00","4 Sep 21:00"];
  times.forEach((t, i) => {
    const x = 241 + i * 43.66;
    add("line", { x1: x, x2: x, y1: 511, y2: 515, stroke: "#ccc" });
    add("text", { x: x + 1, y: 520 }, t);
  });

  // bid line and the open buy position line
  add("line", { x1: 241, x2: 962, y1: 350, y2: 350, stroke: "#6f7a85" });
  add("text", { x: 244, y: 349.500 }, "BUY 1 at 0.67308").setAttribute("fill-opacity", ".8");

  // candles
  let prev = interp(priceAnchors, 241);
  for (let x = 242; x < 959; x += 2.73) {
    const mid = interp(priceAnchors, x);
    const close = mid + (rnd() - 0.5) * 30;
    const top = Math.min(prev, close), bottom = Math.max(prev, close);
    const up = close < prev;
    const hi = Math.min(top - rnd() * 20, mid - 6), lo = Math.max(bottom + rnd() * 20, mid + 6);
    const px = Math.round(x) + 0.5;
    add("line", { x1: px, x2: px, y1: hi, y2: lo, stroke: "#009a00" });
    add("rect", { x: px - 1, y: top, width: 2, height: Math.max(bottom - top, 1), fill: up ? "#60e060" : "#005c00", stroke: "#00ac00", "stroke-width": 0.6 });
    prev = close;
  }

  // moving average, smoothed over the interpolated points
  const maPts = [];
  for (let x = 241; x <= 958; x += 3) {
    let sum = 0;
    for (let k = -5; k <= 5; k++) sum += interp(maAnchors, Math.max(241, Math.min(958, x + k * 3)));
    maPts.push(x + "," + (sum / 11).toFixed(1));
  }
  add("polyline", { points: maPts.join(" "), fill: "none", stroke: "#c01818", "stroke-width": 1.1, "stroke-linejoin": "round" });

  // bid price tag and marker
  add("rect", { x: 963, y: 346, width: 27, height: 9, fill: "#7a8a9a" });
  add("text", { x: 965, y: 353 }, "0.67313");
  add("path", { d: "M958.500 351l3.500 3.500-3.500 3.500-3.500-3.500z", fill: "#2a86e0", stroke: "#cfe6ff", "stroke-width": 0.8 });

  // chart header
  add("rect", { x: 245, y: 41, width: 10, height: 8, fill: "#e8503a" });
  add("path", { d: "M250 41v8M245 43.500h10M245 46.500h10", stroke: "#fff", "stroke-width": 0.8 });
  add("rect", { x: 259, y: 41, width: 10, height: 8, fill: "#e02020" });
  add("path", { d: "M261 41v5h2M266 41v8", stroke: "#fff", "stroke-width": 1.4, fill: "none" });
  add("text", { x: 273, y: 47.500 }, "AUDUSD.std, H1:  Australian Dollar vs US Dollar");
</script>

</body>
</html>
